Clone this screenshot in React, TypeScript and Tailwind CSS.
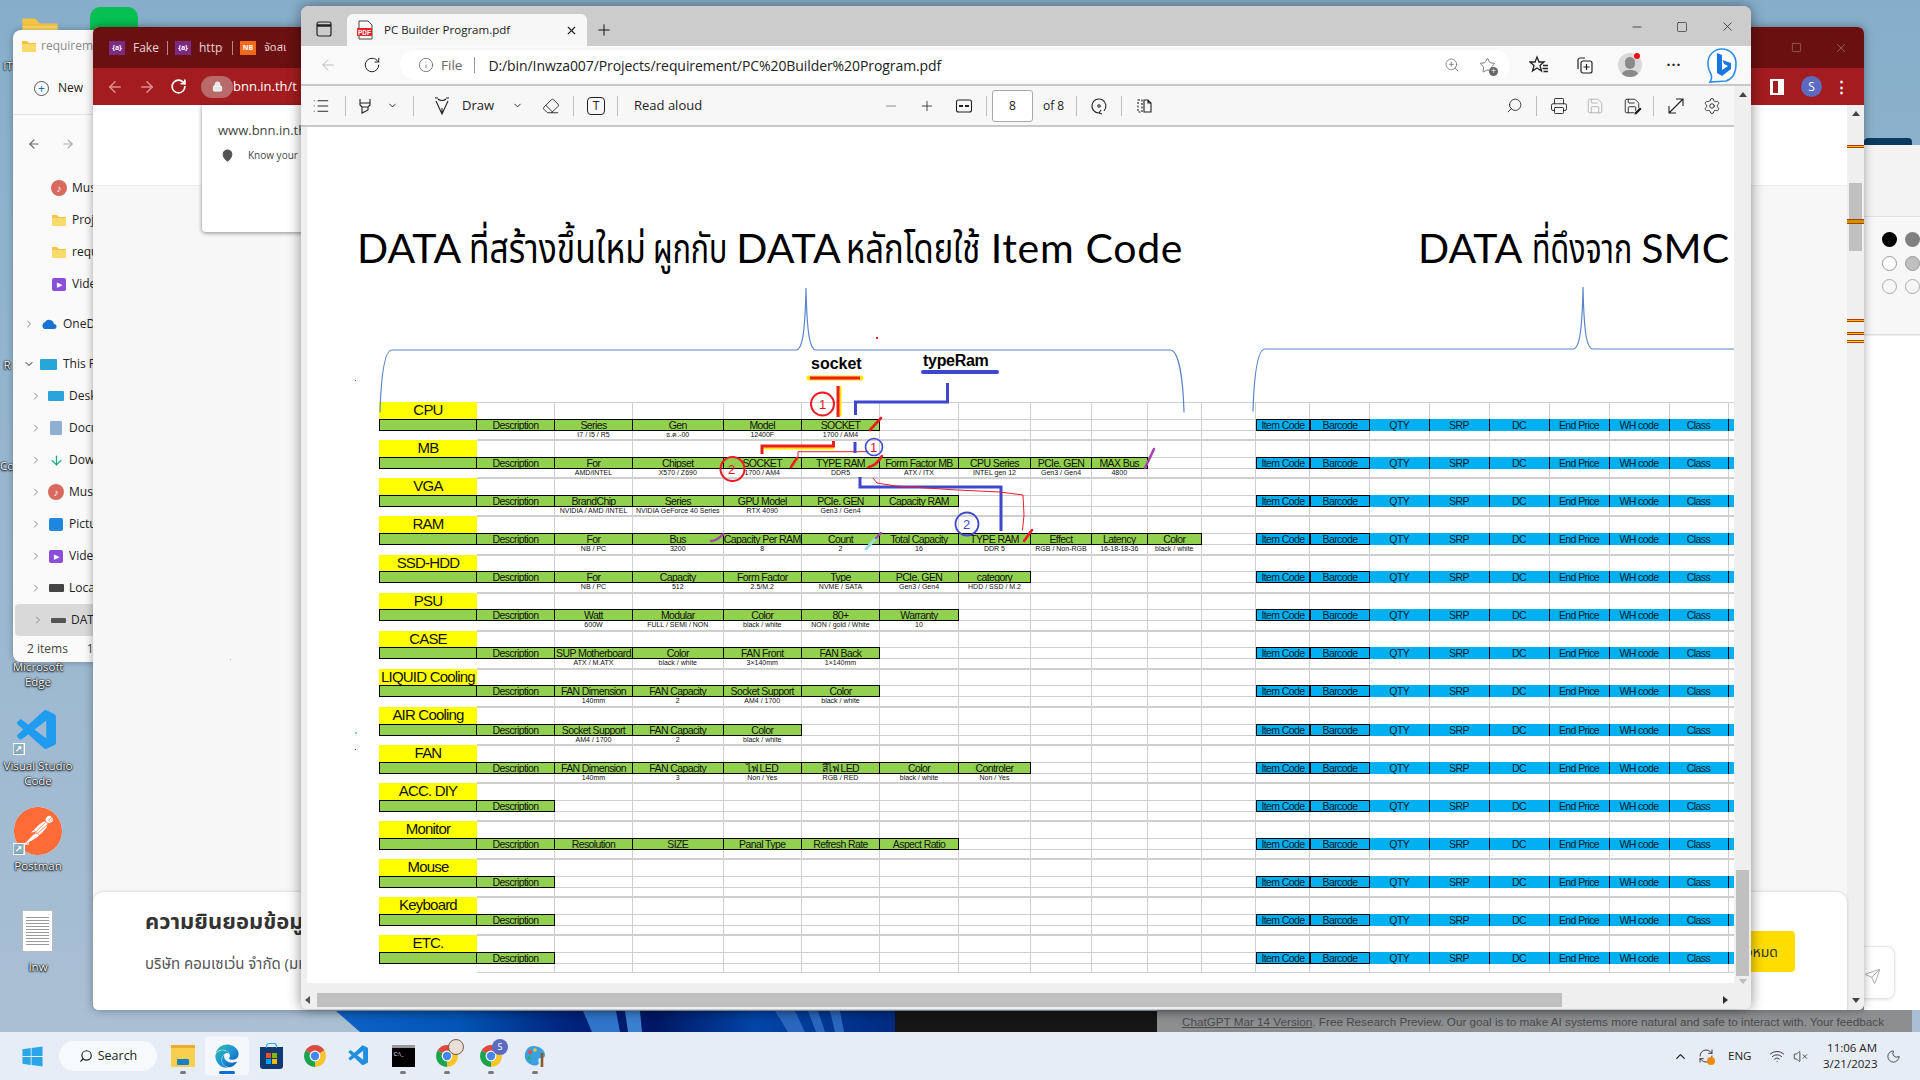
import {
  ArrowLeft, ArrowRight, ChevronDown, ChevronRight, ChevronUp, Eraser, Info, List, Lock, MapPin,
  Minus, Moon, Plus, Printer, RefreshCw, RotateCw, Save, Search, Send, Settings, Square, Star, VolumeX, Wifi, X, ZoomIn,
} from "lucide-react";
import type { ReactNode } from "react";
import { FaEdge, FaWindows } from "react-icons/fa";
import { SiPostman } from "react-icons/si";
import { VscVscode } from "react-icons/vsc";

const SANS = "font-['Open_Sans','Noto_Sans_Thai','Noto_Sans',sans-serif]";
const GRID =
  "grid grid-cols-[98px_78px_78px_90.5px_78.5px_78px_79px_72px_61px_55.5px_54.5px_54px_54px_60px_59.5px_60px_60px_60px_60px_59px_60px]";
const BLUE = ["Item Code", "Barcode", "QTY", "SRP", "DC", "End Price", "WH code", "Class", ""];
const TOTAL = 12;

const SHEET = [
  { name: "CPU", heads: ["Description", "Series", "Gen", "Model", "SOCKET"], subs: ["", "I7 / I5 / R5", "ธ.ค.-00", "12400F", "1700 / AM4"] },
  { name: "MB", heads: ["Description", "For", "Chipset", "SOCKET", "TYPE RAM", "Form Factor MB", "CPU Series", "PCIe. GEN", "MAX Bus"], subs: ["", "AMD/INTEL", "X570 / Z690", "1700 / AM4", "DDR5", "ATX / ITX", "INTEL gen 12", "Gen3 / Gen4", "4800"] },
  { name: "VGA", heads: ["Description", "BrandChip", "Series", "GPU Model", "PCIe. GEN", "Capacity RAM"], subs: ["", "NVIDIA / AMD /INTEL", "NVIDIA GeForce 40 Series", "RTX 4090", "Gen3 / Gen4"] },
  { name: "RAM", heads: ["Description", "For", "Bus", "Capacity Per RAM", "Count", "Total Capacity", "TYPE RAM", "Effect", "Latency", "Color"], subs: ["", "NB / PC", "3200", "8", "2", "16", "DDR 5", "RGB / Non-RGB", "16-18-18-36", "black / white"] },
  { name: "SSD-HDD", heads: ["Description", "For", "Capacity", "Form Factor", "Type", "PCIe. GEN", "category"], subs: ["", "NB / PC", "512", "2.5/M.2", "NVME / SATA", "Gen3 / Gen4", "HDD / SSD / M.2"] },
  { name: "PSU", heads: ["Description", "Watt", "Modular", "Color", "80+", "Warranty"], subs: ["", "600W", "FULL / SEMI / NON", "black / white", "NON / gold / White", "10"] },
  { name: "CASE", heads: ["Description", "SUP Motherboard", "Color", "FAN Front", "FAN Back"], subs: ["", "ATX / M.ATX", "black / white", "3×140mm", "1×140mm"] },
  { name: "LIQUID Cooling", heads: ["Description", "FAN Dimension", "FAN Capacity", "Socket Support", "Color"], subs: ["", "140mm", "2", "AM4 / 1700", "black / white"] },
  { name: "AIR Cooling", heads: ["Description", "Socket Support", "FAN Capacity", "Color"], subs: ["", "AM4 / 1700", "2", "black / white"] },
  { name: "FAN", heads: ["Description", "FAN Dimension", "FAN Capacity", "ไฟ LED", "สีไฟ LED", "Color", "Controler"], subs: ["", "140mm", "3", "Non / Yes", "RGB / RED", "black / white", "Non / Yes"] },
  { name: "ACC. DIY", heads: ["Description"], subs: [] },
  { name: "Monitor", heads: ["Description", "Resolution", "SIZE", "Panal Type", "Refresh Rate", "Aspect Ratio"], subs: [] },
  { name: "Mouse", heads: ["Description"], subs: [] },
  { name: "Keyboard", heads: ["Description"], subs: [] },
  { name: "ETC.", heads: ["Description"], subs: [] },
];

function SheetRow({ name, heads, subs }: { name: string; heads: string[]; subs: string[] }) {
  const empties = Array.from({ length: TOTAL + BLUE.length - 1 });
  return (
    <div className="font-['Liberation_Sans',sans-serif] text-[#111]">
      <div className={`${GRID} h-[16.7px]`}>
        <div className="bg-[#ffff00] text-center text-[15px] leading-[15px] tracking-[-0.8px] whitespace-nowrap overflow-hidden">{name}</div>
        {empties.map((_, i) => (
          <div key={i} className="border-r border-t border-[#cfcfcf]" />
        ))}
      </div>
      <div className={`${GRID} h-[12px]`}>
        <div className="bg-[#92d050] border border-black" />
        {Array.from({ length: TOTAL - 1 }).map((_, i) =>
          heads[i] ? (
            <div key={i} className="bg-[#92d050] border-y border-r border-black text-center text-[10.5px] leading-[10px] tracking-[-0.6px] whitespace-nowrap overflow-hidden text-[#111]">
              {heads[i]}
            </div>
          ) : (
            <div key={i} className="border-r border-y border-[#cfcfcf]" />
          ),
        )}
        {BLUE.map((label, i) => (
          <div
            key={i}
            className={
              i < 2
                ? "bg-[#00b0f0] border border-black text-center text-[10.5px] leading-[10px] tracking-[-0.6px] text-[#06202e] whitespace-nowrap"
                : "bg-[#00b0f0] border-r border-black text-center text-[10.5px] leading-[12px] tracking-[-0.6px] text-[#06202e] whitespace-nowrap"
            }
          >
            {label}
          </div>
        ))}
      </div>
      <div className={`${GRID} h-[9.4px]`}>
        <div />
        {empties.map((_, i) => (
          <div key={i} className="border-r border-b border-[#cfcfcf] text-center text-[7px] leading-[8px] whitespace-nowrap overflow-visible">
            {subs[i] ?? ""}
          </div>
        ))}
      </div>
    </div>
  );
}

// brace lines + the hand-drawn marks on top of the sheet, in screen coordinates
function Annotations() {
  return (
    <svg className="absolute left-0 top-0 w-[1427px] h-[858px] pointer-events-none" viewBox="307 127 1427 858" fill="none" strokeLinecap="round">
      <g stroke="#5b86cc" strokeWidth="1.2">
        <path d="M380 412 C381 380 384 350 392 350 L796 350 C802 350 805 335 806 288 C807 335 810 350 816 350 L1170 350 C1179 350 1183 380 1184 412" />
        <path d="M1253 411 C1254 380 1257 349 1265 349 L1573 349 C1579 349 1582 335 1583 287 C1584 335 1587 349 1593 349 L1740 349" />
      </g>
      <g fontFamily="Liberation Sans, sans-serif">
        <text x="811" y="369" fontSize="16" fontWeight="700" fill="#000">socket</text>
        <text x="923" y="366" fontSize="16" fontWeight="700" fill="#000" letterSpacing="-0.3">typeRam</text>
        <text x="819" y="409" fontSize="13" fill="#e8141c">1</text>
        <text x="728" y="474" fontSize="13" fill="#e8141c">2</text>
        <text x="870" y="452" fontSize="13" fill="#e8141c">1</text>
        <text x="963" y="529" fontSize="13" fill="#3f48cc">2</text>
      </g>
      <path d="M809 378 H861" stroke="#ffe600" strokeWidth="5" />
      <path d="M810 378 H860" stroke="#ed1c24" strokeWidth="3" strokeLinecap="butt" />
      <path d="M840 386 V416" stroke="#ffe600" strokeWidth="3" strokeLinecap="butt" />
      <path d="M838 386 V417" stroke="#ed1c24" strokeWidth="3" strokeLinecap="butt" />
      <circle cx="822.5" cy="404" r="11.5" stroke="#ed1c24" strokeWidth="2" />
      <path d="M923 372 H997" stroke="#3f48cc" strokeWidth="4" />
      <path d="M947.5 383 V402 H855.5 V415" stroke="#3f48cc" strokeWidth="3" strokeLinecap="butt" />
      <path d="M870 430 L881 418" stroke="#ed1c24" strokeWidth="2.6" />
      <path d="M763 448 H833" stroke="#ffe600" strokeWidth="3" />
      <path d="M833.5 441 V446 H762 V454" stroke="#ed1c24" strokeWidth="3" strokeLinecap="butt" />
      <path d="M798 457 V451.7 H868" stroke="#ed1c24" strokeWidth="1" />
      <path d="M797 458 L791 467" stroke="#ed1c24" strokeWidth="2.6" />
      <circle cx="732.5" cy="469" r="12" stroke="#ed1c24" strokeWidth="2" />
      <path d="M855 442 V453" stroke="#3f48cc" strokeWidth="3" strokeLinecap="butt" />
      <circle cx="874" cy="447" r="8.5" stroke="#3f48cc" strokeWidth="1.6" />
      <path d="M868.5 467 C875 466 879 461 882 456" stroke="#ed1c24" strokeWidth="2.6" />
      <path d="M1145 468 L1154 449" stroke="#a349a4" strokeWidth="2.6" />
      <path d="M860 477 V487 H1001 V531" stroke="#3f48cc" strokeWidth="3" strokeLinecap="butt" />
      <path d="M873 478 L877 483 L896 486 L957 490 L1000 492 L1023 495 L1024 515 L1022.5 530" stroke="#ed1c24" strokeWidth="1" />
      <path d="M1024 541 L1032 530" stroke="#ed1c24" strokeWidth="2.6" />
      <circle cx="967" cy="524" r="11.5" stroke="#3f48cc" strokeWidth="1.8" />
      <path d="M711 541 C717 541 720 537 723.5 534" stroke="#a349a4" strokeWidth="2.4" />
      <path d="M866 549 L877 537" stroke="#99d9ea" strokeWidth="3" />
      <path d="M876 538 L881 533" stroke="#a349a4" strokeWidth="2.4" />
      <rect x="876" y="337" width="2" height="2" fill="#ed1c24" stroke="none" />
      <rect x="355" y="380" width="1" height="1" fill="#ed1c24" stroke="none" />
      <rect x="355" y="749" width="1" height="1" fill="#ed1c24" stroke="none" />
      <rect x="355" y="732" width="2" height="2" fill="#7fd0ee" stroke="none" />
    </svg>
  );
}

function Sep() {
  return <span className="block w-px h-[20px] bg-[#bdbdbd] shrink-0" />;
}

function PdfToolbar() {
  return (
    <div className="h-[41px] shrink-0 flex items-center bg-[#f7f7f7] border-b-2 border-[#c8c8c8] text-[#222] text-[13px]">
      <List size={18} strokeWidth={1.3} className="ml-[11px]" />
      <span className="ml-[15px]"><Sep /></span>
      <svg width="18" height="18" viewBox="0 0 18 18" fill="none" stroke="#222" strokeWidth="1.1" className="ml-[10px]">
        <path d="M4 2 V8 L6 10 V16 L12 13 V10 L14 8 V2 M4 6 H14 M6 10 H12" />
      </svg>
      <ChevronDown size={11} className="ml-[13px]" />
      <span className="ml-[15px]"><Sep /></span>
      <svg width="18" height="18" viewBox="0 0 18 18" fill="none" stroke="#222" strokeWidth="1.1" className="ml-[19px]">
        <path d="M3 4 L9 17 L15 4 M2 1 H5 M13 1 H16 M5 2 C7 4 11 4 13 2 M9 17 V11" />
      </svg>
      <span className="ml-[11px] w-[32px]">Draw</span>
      <ChevronDown size={11} className="ml-[18px]" />
      <Eraser size={18} strokeWidth={1.2} className="ml-[19px]" />
      <span className="ml-[13px]"><Sep /></span>
      <span className="ml-[13px] w-[18px] h-[18px] rounded-[4px] border border-[#222] flex items-center justify-center text-[12px] leading-none">T</span>
      <span className="ml-[12px]"><Sep /></span>
      <span className="ml-[16px] w-[70px] whitespace-nowrap">Read aloud</span>
      <Minus size={16} strokeWidth={1.2} className="ml-[179px] text-[#777]" />
      <Plus size={16} strokeWidth={1.2} className="ml-[20px]" />
      <svg width="18" height="18" viewBox="0 0 18 18" fill="none" stroke="#222" strokeWidth="1.1" className="ml-[20px]">
        <rect x="1.5" y="3" width="15" height="12" rx="2" />
        <path d="M4 9 H8 M10 9 H14" strokeWidth="1.8" />
      </svg>
      <span className="ml-[13px]"><Sep /></span>
      <span className="ml-[5px] w-[41px] h-[32px] rounded-[3px] border border-[#a8a8a8] bg-white flex items-center justify-center text-[12px]">8</span>
      <span className="ml-[10px] w-[22px] text-[12px] whitespace-nowrap">of 8</span>
      <span className="ml-[11px]"><Sep /></span>
      <svg width="18" height="18" viewBox="0 0 18 18" fill="none" stroke="#222" strokeWidth="1.1" className="ml-[13px]">
        <path d="M9 2 A7 7 0 1 1 4 4.2 M9 2 L6 1 M9 2 L7 5" transform="rotate(180 9 9)" />
        <circle cx="9" cy="9" r="1.2" />
      </svg>
      <span className="ml-[13px]"><Sep /></span>
      <svg width="18" height="18" viewBox="0 0 18 18" fill="none" stroke="#222" strokeWidth="1.1" className="ml-[13px]">
        <path d="M3 3 H7 V15 H3 Z" strokeDasharray="2 1.5" />
        <path d="M9 3 H13 L16 6 V15 H9 Z M13 3 V6 H16" />
      </svg>
      <div className="ml-auto mr-[13px] flex items-center">
        <Search size={17} strokeWidth={1.2} className="-scale-x-100" />
        <span className="ml-[13px]"><Sep /></span>
        <Printer size={18} strokeWidth={1.2} className="ml-[13px]" />
        <Save size={18} strokeWidth={1.2} className="ml-[18px] text-[#b0b0b0]" />
        <span className="relative ml-[19px]">
          <Save size={18} strokeWidth={1.2} />
          <svg width="10" height="10" viewBox="0 0 10 10" className="absolute -right-[2px] -bottom-[1px]">
            <path d="M1 9 L1.5 6.5 L7 1 L9 3 L3.5 8.5 Z" fill="#222" stroke="#f7f7f7" strokeWidth="0.7" />
          </svg>
        </span>
        <span className="ml-[12px]"><Sep /></span>
        <svg width="18" height="18" viewBox="0 0 18 18" fill="none" stroke="#222" strokeWidth="1.1" className="ml-[13px]">
          <path d="M2 16 L16 2 M9 2 H16 V9 M2 9 V16 H9" />
        </svg>
        <Settings size={18} strokeWidth={1.2} className="ml-[18px]" />
      </div>
    </div>
  );
}

function Thai({ children, className }: { children: ReactNode; className: string }) {
  return <span className={`block shrink-0 origin-left ${className}`}>{children}</span>;
}

function PdfPage() {
  return (
    <div className="relative flex-1 min-h-0 ml-[6px] bg-white overflow-hidden">
      <div className="pt-[93px] flex h-[148px] whitespace-nowrap text-[41px] leading-[56px] text-black font-['Lato','Noto_Sans_Thai','Noto_Sans',sans-serif]">
        <div className="pl-[50px] w-[1111px] shrink-0 flex">
          <span>DATA</span>
          <Thai className="ml-[8px] w-[172px] scale-x-[0.82]">ที่สร้างขึ้นใหม่</Thai>
          <Thai className="ml-[12px] w-[73px] scale-x-[0.74]">ผูกกับ</Thai>
          <span className="ml-[10px]">DATA</span>
          <Thai className="ml-[5px] w-[135px] scale-x-[0.8]">หลักโดยใช้</Thai>
          <span className="ml-[10px] tracking-[0.7px]">Item Code</span>
        </div>
        <div className="flex">
          <span>DATA</span>
          <Thai className="ml-[10px] w-[104px] scale-x-[0.74]">ที่ดึงจาก</Thai>
          <span className="ml-[5px]">SMC</span>
        </div>
      </div>
      <div className="ml-[72px] mt-[127.2px] w-[1500px]">
        {SHEET.map((row) => (
          <SheetRow key={row.name} {...row} />
        ))}
      </div>
      <Annotations />
    </div>
  );
}

function PdfWindow() {
  return (
    <div className={`absolute left-[301px] top-[6px] w-[1450px] h-[1003px] flex flex-col rounded-t-[8px] rounded-b-[6px] overflow-hidden bg-[#efefef] shadow-[0_0_14px_rgba(0,0,0,0.45)] ${SANS}`}>
      <div className="h-[40px] shrink-0 bg-[#cccccc] flex items-end relative">
        <svg width="18" height="18" viewBox="0 0 18 18" fill="none" stroke="#222" strokeWidth="1.2" className="ml-[14px] mb-[8px]">
          <rect x="2" y="2" width="14" height="14" rx="2" />
          <path d="M2 5.5 H16" strokeWidth="2.4" />
        </svg>
        <div className="ml-[14px] w-[240px] h-[32px] bg-[#f7f7f7] rounded-t-[6px] flex items-center text-[11.5px] text-[#222]">
          <svg width="18" height="20" viewBox="0 0 18 20" className="ml-[9px]">
            <path d="M3 1 H12 L16 5 V19 H3 Z" fill="#fff" stroke="#444" />
            <rect x="1" y="8" width="15" height="8" fill="#e5252a" />
            <text x="8.5" y="14.5" textAnchor="middle" fontSize="6.5" fontWeight="700" fill="#fff" fontFamily="Liberation Sans, sans-serif">PDF</text>
          </svg>
          <span className="ml-[10px] whitespace-nowrap">PC Builder Program.pdf</span>
          <X size={13} className="ml-auto mr-[9px]" />
        </div>
        <Plus size={18} strokeWidth={1.2} className="ml-[8px] mb-[7px]" />
        <div className="ml-auto mr-[16px] mb-[12px] flex items-center gap-[32px] text-[#222]">
          <Minus size={14} strokeWidth={1.3} />
          <Square size={12} strokeWidth={1.3} />
          <X size={15} strokeWidth={1.2} />
        </div>
      </div>
      <div className="h-[38px] shrink-0 bg-[#f9f9f9] flex items-center text-[#222]">
        <ArrowLeft size={18} strokeWidth={1.2} className="ml-[18px] text-[#b5b5b5]" />
        <RotateCw size={18} strokeWidth={1.3} className="ml-[26px]" />
        <div className="ml-[19px] w-[1110px] h-[30px] bg-white rounded-full flex items-center text-[14px]">
          <Info size={16} strokeWidth={1.2} className="ml-[18px] text-[#666]" />
          <span className="ml-[7px] text-[#666] text-[13.5px]">File</span>
          <span className="ml-[12px] w-px h-[16px] bg-[#999]" />
          <span className="ml-[13px] whitespace-nowrap tracking-[-0.08px]">D:/bin/Inwza007/Projects/requirement/PC%20Builder%20Program.pdf</span>
          <ZoomIn size={16} strokeWidth={1.1} className="ml-auto text-[#666]" />
          <span className="relative ml-[19px] mr-[14px]">
            <Star size={17} strokeWidth={1.1} className="text-[#555]" />
            <span className="absolute -right-[2px] -bottom-[2px] w-[9px] h-[9px] rounded-full bg-[#666] text-white text-[9px] leading-[8px] text-center">+</span>
          </span>
        </div>
        <svg width="20" height="20" viewBox="0 0 20 20" fill="none" stroke="#222" strokeWidth="1.3" className="ml-[19px]">
          <path d="M8 2 L10 7 H15 L11 10.5 L12.5 16 L8 13 L3.5 16 L5 10.5 L1 7 H6 Z" />
          <path d="M14 10.5 H19 M13.5 13.5 H19 M14.5 16.5 H19" />
        </svg>
        <svg width="20" height="20" viewBox="0 0 20 20" fill="none" stroke="#222" strokeWidth="1.2" className="ml-[25px]">
          <path d="M4 14 V5 a2 2 0 0 1 2 -2 h5" />
          <rect x="7" y="6" width="11" height="12" rx="2" />
          <path d="M12.5 9 V15 M9.5 12 H15.5" />
        </svg>
        <span className="relative ml-[24px] w-[24px] h-[24px]">
          <span className="absolute inset-0 rounded-full bg-[#d9d9d9] overflow-hidden flex flex-col items-center justify-end">
            <span className="w-[10px] h-[12px] rounded-full bg-[#8a8a8a] mb-[1px]" />
            <span className="w-[18px] h-[7px] rounded-t-full bg-[#8a8a8a]" />
          </span>
          <span className="absolute right-[2px] top-0 w-[6px] h-[6px] rounded-full bg-[#ee1111]" />
        </span>
        <span className="ml-[24px] w-[16px] text-center text-[14px] leading-none font-bold tracking-[1px]">···</span>
        <svg width="32" height="38" viewBox="0 0 32 38" className="ml-[24px]">
          <path d="M16 3 C24 3 30 9 30 18 C30 27 26 33 20 35 L4 36 C6 33 6 31 5 28 C3 25 2 21 2 17 C2 9 8 3 16 3 Z" fill="#fff" stroke="#2f8fe8" strokeWidth="1.6" />
          <path d="M11 7 L16 9 V24 L22 20 L18 18 L16.5 14 L25 17 V23 L16 30 L11 27 Z" fill="#1976e6" />
        </svg>
      </div>
      <div className="flex-1 min-h-0 flex border-t-2 border-[#c8c8c8]">
        <div className="flex-1 min-w-0 flex flex-col">
          <PdfToolbar />
          <PdfPage />
          <div className="h-[26px] shrink-0 flex items-center pt-[10px] pb-[2px] bg-[#efefef]">
            <span className="ml-[4px] w-0 h-0 border-y-[4px] border-y-transparent border-r-[5px] border-r-[#555]" />
            <span className="ml-[7px] w-[1245px] h-[14px] bg-[#c0c0c0]" />
            <span className="ml-[161px] w-0 h-0 border-y-[4px] border-y-transparent border-l-[5px] border-l-[#333]" />
          </div>
        </div>
        <div className="w-[17px] shrink-0 flex flex-col items-center bg-[#efefef] py-[6px]">
          <span className="w-0 h-0 border-x-[4px] border-x-transparent border-b-[5px] border-b-[#444]" />
          <span className="mt-auto w-[13px] h-[106px] bg-[#c0c0c0]" />
          <span className="mt-[3px] mb-[19px] w-0 h-0 border-x-[4px] border-x-transparent border-t-[5px] border-t-[#bbb]" />
        </div>
      </div>
    </div>
  );
}

function FolderIcon({ size = 16 }: { size?: number }) {
  return (
    <svg width={size} height={size} viewBox="0 0 16 16">
      <path d="M1 3 H6 L8 5 H15 V14 H1 Z" fill="#f5c242" />
      <path d="M1 6 H15 V14 H1 Z" fill="#fbd96b" />
    </svg>
  );
}

function TabIcon({ label, className }: { label: string; className: string }) {
  return <span className={`w-[16px] h-[14px] text-[7px] leading-[14px] text-center font-bold text-white shrink-0 ${className}`}>{label}</span>;
}

function ChromeWindow() {
  return (
    <div className={`absolute left-[93px] top-[27px] w-[1771px] h-[983px] flex flex-col rounded-[6px] overflow-hidden bg-white shadow-[0_0_10px_rgba(0,0,0,0.35)] ${SANS}`}>
      <div className="h-[41px] shrink-0 bg-[#6b1010] flex items-center text-[12px] text-[#e8d4d4]">
        <TabIcon label="{a}" className="ml-[16px] bg-[#7b2a80]" />
        <span className="ml-[8px] w-[25px]">Fake</span>
        <span className="ml-[9px] w-px h-[14px] bg-[#b38a8a]" />
        <TabIcon label="{a}" className="ml-[7px] bg-[#7b2a80]" />
        <span className="ml-[8px] w-[24px] overflow-hidden">https</span>
        <span className="ml-[9px] w-px h-[14px] bg-[#b38a8a]" />
        <TabIcon label="NB" className="ml-[7px] bg-[#f26a1b]" />
        <span className="ml-[8px] w-[25px] overflow-hidden text-[11px] whitespace-nowrap">จัดสเ</span>
        <div className="ml-auto mr-[16px] flex items-center gap-[32px] text-[#b08a8a]">
          <Square size={11} strokeWidth={1.2} />
          <X size={14} strokeWidth={1.1} />
        </div>
      </div>
      <div className="h-[37px] shrink-0 bg-[#a31c1f] flex items-center text-white">
        <ArrowLeft size={18} className="ml-[13px] text-[#dd8f8f]" />
        <ArrowRight size={18} className="ml-[14px] text-[#dd8f8f]" />
        <RotateCw size={17} strokeWidth={2.4} className="ml-[14px]" />
        <span className="ml-[14px] w-[32px] h-[22px] rounded-full bg-[#b96a6a] flex items-center justify-center"><Lock size={11} fill="#e6e6e6" /></span>
        <span className="text-[13px]">bnn.in.th/t</span>
        <div className="ml-auto mr-[20px] flex items-center">
          <span className="w-[14px] h-[16px] bg-white border-l-[3px] border-r-[6px] border-y-[2px] border-white flex"><span className="flex-1 bg-[#a31c1f]" /></span>
          <span className="ml-[17px] w-[21px] h-[21px] rounded-full bg-[#5c6bc0] text-[12px] text-center leading-[21px]">S</span>
          <span className="ml-[12px] w-[10px] text-center text-[15px] font-bold leading-none">⋮</span>
        </div>
      </div>
      <div className="relative flex-1 flex min-h-0">
        <div className="flex-1 flex flex-col">
          <div className="h-[81px] bg-white border-b border-[#eeeeee]" />
          <div className="flex-1 bg-[#f7f7f7]" />
        </div>
        <div className="relative w-[17px] bg-[#efefef] flex flex-col items-center py-[6px]">
          <span className="w-0 h-0 border-x-[4px] border-x-transparent border-b-[5px] border-b-[#444]" />
          <span className="mt-[67px] w-[13px] h-[68px] bg-[#c0c0c0]" />
          <span className="mt-auto mb-[1px] w-0 h-0 border-x-[4px] border-x-transparent border-t-[5px] border-t-[#444]" />
          <span className="absolute left-0 right-0 top-[40px] h-[3px] bg-[#f2c200] border-y border-[#b33c00]" />
          <span className="absolute left-0 right-0 top-[114px] h-[5px] bg-[#c89400] border-y border-[#b33c00]" />
          <span className="absolute left-0 right-0 top-[214px] h-[3px] bg-[#f2c200] border-y border-[#b33c00]" />
          <span className="absolute left-0 right-0 top-[227px] h-[3px] bg-[#f2c200] border-y border-[#b33c00]" />
          <span className="absolute left-0 right-0 top-[235px] h-[3px] bg-[#ffe600] border-y border-[#b33c00]" />
        </div>
        <div className="absolute left-[109px] top-0 w-[200px] h-[127px] bg-white rounded-b-[4px] shadow-[0_1px_4px_rgba(0,0,0,0.45)] text-[#444]">
          <div className="pl-[16px] pt-[16px] text-[13px] leading-[18px]">www.bnn.in.th</div>
          <div className="pl-[19px] pt-[9px] flex items-center text-[10px]">
            <MapPin size={13} fill="#555" className="text-[#555]" />
            <span className="ml-[14px]">Know your location</span>
          </div>
        </div>
        <div className="absolute left-0 right-[17px] bottom-0 h-[118px] bg-white rounded-t-[10px] shadow-[0_0_3px_rgba(0,0,0,0.2)]">
          <div className="pl-[52px] pt-[12px] text-[22px] leading-[32px] font-bold text-[#333] whitespace-nowrap">ความยินยอมข้อมูล</div>
          <div className="pl-[52px] pt-[16px] text-[15px] leading-[22px] text-[#555] whitespace-nowrap">บริษัท คอมเซเว่น จำกัด (มหาชน)</div>
          <div className="absolute right-[52px] top-[39px] w-[100px] h-[41px] rounded-[4px] bg-[#ffdd00] text-right pr-[17px] text-[14px] leading-[41px] text-[#333] whitespace-nowrap">ยอมรับทั้งหมด</div>
        </div>
      </div>
    </div>
  );
}

const NAV = [
  { label: "Music", icon: "music" },
  { label: "Projects", icon: "folder" },
  { label: "requirement", icon: "folder" },
  { label: "Videos", icon: "video" },
];
const PC = [
  { label: "Desktop", icon: "desk" },
  { label: "Documents", icon: "doc" },
  { label: "Downloads", icon: "down" },
  { label: "Music", icon: "music" },
  { label: "Pictures", icon: "pict" },
  { label: "Videos", icon: "video" },
  { label: "Local Disk", icon: "local" },
  { label: "DATA", icon: "drive" },
];

function NavIcon({ type }: { type: string }) {
  if (type === "folder") return <FolderIcon />;
  if (type === "music") return <span className="w-[16px] h-[16px] rounded-full bg-[#d9695f] text-white text-[10px] leading-[16px] text-center">♪</span>;
  if (type === "video") return <span className="w-[14px] h-[13px] rounded-[2px] bg-[#8a4fd8] text-white text-[7px] leading-[13px] text-center">▶</span>;
  if (type === "desk") return <span className="w-[16px] h-[10px] rounded-[1px] bg-[#2ba3dd]" />;
  if (type === "doc") return <span className="w-[12px] h-[14px] bg-[#8fb0d0] rounded-[1px]" />;
  if (type === "down") return <ArrowLeft size={15} strokeWidth={2} className="text-[#23a98a] -rotate-90" />;
  if (type === "pict") return <span className="w-[14px] h-[13px] rounded-[2px] bg-[#1f87e0]" />;
  if (type === "local") return <span className="w-[15px] h-[8px] rounded-[1px] bg-[#444]" />;
  return <span className="w-[15px] h-[5px] rounded-[1px] bg-[#555]" />;
}

function ExplorerWindow() {
  return (
    <div className={`absolute left-[13px] top-[30px] w-[150px] h-[632px] rounded-[8px] overflow-hidden bg-[#fafafa] shadow-[0_0_6px_rgba(0,0,0,0.3)] text-[12px] text-[#222] ${SANS}`}>
      <div className="h-[32px] flex items-center pl-[8px] text-[#8a8a8a]">
        <FolderIcon />
        <span className="ml-[4px]">requirement</span>
      </div>
      <div className="h-[53px] flex items-center pl-[21px] border-b border-[#e2e2e2]">
        <span className="w-[15px] h-[15px] rounded-full border border-[#555] text-[#0a70c8] text-[12px] leading-[13px] text-center">+</span>
        <span className="ml-[9px]">New</span>
      </div>
      <div className="h-[57px] flex items-center pl-[14px] gap-[20px]">
        <ArrowLeft size={14} className="text-[#666]" />
        <ArrowRight size={14} className="text-[#aaa]" />
      </div>
      {NAV.map((n) => (
        <div key={n.label} className="h-[32px] flex items-center pl-[38px] whitespace-nowrap">
          <span className="w-[16px] flex justify-center"><NavIcon type={n.icon} /></span>
          <span className="ml-[5px]">{n.label}</span>
        </div>
      ))}
      <div className="h-[32px] mt-[8px] flex items-center pl-[10px]">
        <ChevronRight size={12} className="text-[#888]" />
        <svg width="18" height="12" viewBox="0 0 18 12" className="ml-[5px]"><path d="M4 11 a4 4 0 0 1 1 -7 a5 5 0 0 1 9 2 a2.5 2.5 0 0 1 0 5 Z" fill="#1a73d2" /></svg>
        <span className="ml-[5px]">OneDrive</span>
      </div>
      <div className="h-[32px] mt-[8px] flex items-center pl-[10px]">
        <ChevronDown size={12} />
        <span className="ml-[5px] w-[17px] h-[11px] bg-[#27a6d8] rounded-[1px]" />
        <span className="ml-[6px]">This PC</span>
      </div>
      {PC.map((n) => (
        <div key={n.label} className={`h-[32px] flex items-center pl-[17px] ${n.label === "DATA" ? "bg-[#d9d9d9] mx-[2px] rounded-[4px] pl-[15px]" : ""}`}>
          <ChevronRight size={12} className="text-[#888]" />
          <span className="ml-[6px] w-[16px] flex justify-center"><NavIcon type={n.icon} /></span>
          <span className="ml-[5px]">{n.label}</span>
        </div>
      ))}
      <div className="h-[26px] flex items-center pl-[14px] text-[#444]">
        <span>2 items</span>
        <span className="ml-[19px]">1</span>
      </div>
    </div>
  );
}

// window that sits behind Chrome on the right edge
function PaintWindow() {
  return (
    <div className="absolute left-[1864px] top-[138px] w-[56px] h-[872px] flex flex-col">
      <div className="h-[7px] w-[48px] bg-[#0b3a60] rounded-t-[4px]" />
      <div className="h-[72px] bg-[#f3f3f3] border-b border-[#e0e0e0]" />
      <div className="h-[118px] bg-[#f7f7f7] border-b border-[#e0e0e0] pl-[18px] pt-[15px] grid grid-cols-[23px_23px] auto-rows-[23.5px] overflow-hidden">
        <span className="w-[15px] h-[15px] rounded-full bg-black" />
        <span className="w-[15px] h-[15px] rounded-full bg-[#808080]" />
        <span className="w-[15px] h-[15px] rounded-full bg-white border border-[#999]" />
        <span className="w-[15px] h-[15px] rounded-full bg-[#c0c0c0] border border-[#999]" />
        <span className="w-[15px] h-[15px] rounded-full bg-[#f7f7f7] border border-[#aaa]" />
        <span className="w-[15px] h-[15px] rounded-full bg-[#f7f7f7] border border-[#aaa]" />
      </div>
      <div className="flex-1 bg-white pt-[10px] border-t border-[#eeeeee]">
        <div className="mt-[600px] w-[31px] h-[53px] border border-[#e6e6e6] border-l-0 rounded-r-[8px] pt-[21px] shadow-[0_1px_3px_rgba(0,0,0,0.1)]">
          <Send size={17} strokeWidth={1.2} className="text-[#9aa0a6]" />
        </div>
      </div>
    </div>
  );
}

function DesktopLabel({ children, className }: { children: ReactNode; className: string }) {
  return (
    <div className={`absolute w-[76px] text-center text-white text-[11.5px] leading-[15px] [text-shadow:0_1px_2px_#000,0_0_2px_#000,0_0_1px_#000] font-['Open_Sans',sans-serif] ${className}`}>{children}</div>
  );
}

function ShortcutArrow() {
  return <span className="absolute -left-[1px] bottom-0 w-[12px] h-[12px] bg-white text-[#1a73d2] text-[9px] leading-[11px] text-center">↗</span>;
}

function Desktop() {
  return (
    <div className="relative flex-1 overflow-hidden bg-gradient-to-b from-[#86aeca] to-[#a9bfd4]">
      <div className="absolute left-[20px] top-[11px]"><FolderIcon size={40} /></div>
      <div className="absolute left-[90px] top-[7px] w-[48px] h-[40px] rounded-[10px] bg-[#06c152]" />
      <DesktopLabel className="-left-[30px] top-[58px]">IT</DesktopLabel>
      <DesktopLabel className="-left-[31px] top-[357px]">R</DesktopLabel>
      <DesktopLabel className="-left-[31px] top-[458px]">Co</DesktopLabel>
      <DesktopLabel className="left-0 top-[659px]">Microsoft<br />Edge</DesktopLabel>

      <div className="absolute left-[14px] top-[707px] w-[48px] h-[48px]">
        <VscVscode size={48} className="text-[#1f9cf0]" />
        <ShortcutArrow />
      </div>
      <DesktopLabel className="left-0 top-[758px]">Visual Studio<br />Code</DesktopLabel>
      <div className="absolute left-[14px] top-[807px] w-[48px] h-[48px] rounded-full bg-white">
        <SiPostman size={48} className="text-[#ff6c37]" />
        <ShortcutArrow />
      </div>
      <DesktopLabel className="left-0 top-[858px]">Postman</DesktopLabel>
      <div className="absolute left-[22px] top-[910px] w-[31px] h-[42px] bg-white border border-[#bbb] flex flex-col gap-[2px] px-[3px] pt-[6px]">
        {Array.from({ length: 10 }).map((_, i) => (
          <span key={i} className="h-px bg-[#9a9a9a]" />
        ))}
      </div>
      <DesktopLabel className="left-0 top-[959px]">Inw</DesktopLabel>

      <svg className="absolute left-[330px] top-[1005px] w-[830px] h-[27px]" viewBox="0 0 830 27">
        <defs>
          <linearGradient id="bloom" x1="0" y1="0" x2="1" y2="0">
            <stop offset="0" stopColor="#0e63c8" />
            <stop offset="0.22" stopColor="#0255b5" />
            <stop offset="0.42" stopColor="#01237c" />
            <stop offset="0.57" stopColor="#001763" />
            <stop offset="0.75" stopColor="#0245a8" />
            <stop offset="1" stopColor="#012a80" />
          </linearGradient>
        </defs>
        <path d="M6 6 L30 27 H565 V6 Z" fill="url(#bloom)" />
        <path d="M253 6 H286 L290 27 H262 Z" fill="#2f74c8" />
        <path d="M295 6 H310 L312 27 H298 Z" fill="#3b7fcf" />
        <path d="M445 6 H465 L475 27 H458 Z" fill="#2a66bd" />
        <path d="M478 6 H488 L495 27 H486 Z" fill="#2a66bd" />
        <path d="M500 6 H510 L514 27 H505 Z" fill="#2a66bd" />
        <rect x="565" y="6" width="262" height="21" fill="#161616" />
      </svg>
      <div className="absolute left-[1157px] top-[1005px] w-[755px] h-[27px] bg-[#8d8e90] pt-[9px] pl-[25px] whitespace-nowrap text-[11.7px] leading-[15px] text-[#4a4a4d] font-['Liberation_Sans',sans-serif]">
        <span className="underline">ChatGPT Mar 14 Version</span>. Free Research Preview. Our goal is to make AI systems more natural and safe to interact with. Your feedback
      </div>

      <PaintWindow />
      <ExplorerWindow />
      <ChromeWindow />
      <PdfWindow />
      <div className="absolute left-[230px] top-[659px] w-[1px] h-[1px] bg-[#7fd0ee]" />
    </div>
  );
}

function ChromeLogo({ badge }: { badge?: "s" | "cat" }) {
  return (
    <span className="relative block w-[24px] h-[24px]">
      <svg width="24" height="24" viewBox="0 0 24 24">
        <path d="M12 12 L2.5 6.5 A11 11 0 0 1 21.5 6.5 Z" fill="#dd4b3e" />
        <path d="M12 12 L21.5 6.5 A11 11 0 0 1 12 23 Z" fill="#f7c52b" />
        <path d="M12 12 L12 23 A11 11 0 0 1 2.5 6.5 Z" fill="#1ca34f" />
        <circle cx="12" cy="12" r="5.4" fill="#fff" />
        <circle cx="12" cy="12" r="4.2" fill="#4285f4" />
      </svg>
      {badge === "s" && <span className="absolute -top-[5px] -right-[5px] w-[16px] h-[16px] rounded-full bg-[#5c6bc0] text-white text-[9px] leading-[16px] text-center">S</span>}
      {badge === "cat" && <span className="absolute -top-[5px] -right-[5px] w-[16px] h-[16px] rounded-full bg-[#e8e0d8] border border-[#7a5a44]" />}
    </span>
  );
}

function Pip() {
  return <span className="absolute bottom-[6px] left-1/2 -translate-x-1/2 w-[6px] h-[3px] rounded-full bg-[#7a7a7a]" />;
}

function Taskbar() {
  return (
    <div className={`h-[48px] shrink-0 flex items-center bg-[#e6edf6] text-[#222] text-[12px] ${SANS}`}>
      <svg width="0" height="0" className="absolute">
        <defs>
          <linearGradient id="edgeFill" x1="0" y1="0" x2="1" y2="1">
            <stop offset="0" stopColor="#35c1a5" />
            <stop offset="0.55" stopColor="#1b8fd8" />
            <stop offset="1" stopColor="#0b4fa0" />
          </linearGradient>
        </defs>
      </svg>
      <span className="ml-[21px]"><FaWindows size={23} className="text-[#2aa6e8]" /></span>
      <div className="ml-[15px] w-[98px] h-[30px] rounded-full bg-[#f7fafd] flex items-center justify-center gap-[5px] text-[12.5px]">
        <Search size={14} className="-scale-x-100" />
        Search
      </div>
      <div className="ml-[4px] flex h-full items-center">
        <span className="relative w-[44px] h-full flex items-center justify-center">
          <span className="relative block w-[24px] h-[22px] bg-[#f9cf4f] border-t-[3px] border-[#e9ad2a]">
            <span className="absolute left-[6px] bottom-[2px] w-[12px] h-[6px] rounded-[1px] bg-[#1b7fc4]" />
          </span>
          <Pip />
        </span>
        <span className="relative w-[44px] h-[38px] rounded-[4px] bg-[#f4f7fb] flex items-center justify-center">
          <FaEdge size={24} fill="url(#edgeFill)" />
          <span className="absolute bottom-[1px] left-1/2 -translate-x-1/2 w-[16px] h-[3px] rounded-full bg-[#0a6cd6]" />
        </span>
        <span className="w-[44px] flex justify-center">
          <span className="relative w-[23px] h-[22px] rounded-b-[3px] bg-[#123a72] mt-[4px] flex flex-wrap content-center justify-center gap-px px-[6px]">
            <span className="absolute -top-[4px] left-[6px] w-[11px] h-[5px] rounded-t-[3px] border border-b-0 border-[#2aa6e8]" />
            <span className="w-[5px] h-[5px] bg-[#f25022]" />
            <span className="w-[5px] h-[5px] bg-[#7fba00]" />
            <span className="w-[5px] h-[5px] bg-[#00a4ef]" />
            <span className="w-[5px] h-[5px] bg-[#ffb900]" />
          </span>
        </span>
        <span className="w-[44px] flex justify-center"><ChromeLogo /></span>
        <span className="w-[44px] flex justify-center"><VscVscode size={24} className="text-[#1f8fe0]" /></span>
        <span className="relative w-[44px] h-full flex items-center justify-center">
          <span className="w-[23px] h-[22px] bg-black border-t-[3px] border-[#9a9a9a] text-white text-[6px] leading-[12px] pl-[2px]">C:\_</span>
          <Pip />
        </span>
        <span className="relative w-[44px] h-full flex items-center justify-center"><ChromeLogo badge="cat" /><Pip /></span>
        <span className="relative w-[44px] h-full flex items-center justify-center"><ChromeLogo badge="s" /><Pip /></span>
        <span className="relative w-[44px] h-full flex items-center justify-center">
          <svg width="24" height="24" viewBox="0 0 24 24">
            <path d="M10 2 C17 2 22 6 22 11 C22 14 19 14 17 14 C15 14 15 17 16 19 C15 22 12 22 9 21 C4 19 1 15 2 10 C3 5 6 2 10 2 Z" fill="#3aa0e0" />
            <circle cx="7" cy="8" r="2" fill="#e94b3c" />
            <circle cx="12" cy="6" r="1.8" fill="#f7c52b" />
            <circle cx="6" cy="14" r="1.8" fill="#27ae60" />
            <path d="M19 9 L19 23" stroke="#8a5a2b" strokeWidth="2.6" />
          </svg>
          <Pip />
        </span>
      </div>
      <div className="ml-auto flex items-center pr-[19px]">
        <ChevronUp size={15} />
        <span className="relative ml-[10px]">
          <RefreshCw size={16} strokeWidth={1.3} />
          <span className="absolute -right-[1px] -bottom-[1px] w-[8px] h-[8px] rounded-full bg-[#f08a00]" />
        </span>
        <span className="ml-[14px] w-[24px] text-[11.5px]">ENG</span>
        <Wifi size={16} strokeWidth={1.3} className="ml-[17px]" />
        <VolumeX size={15} strokeWidth={1.2} className="ml-[8px]" />
        <div className="ml-[15px] w-[54px] text-right text-[11.5px] leading-[16px] whitespace-nowrap">
          <div>11:06 AM</div>
          <div>3/21/2023</div>
        </div>
        <Moon size={15} strokeWidth={1.2} className="ml-[9px]" />
      </div>
    </div>
  );
}

export default function App() {
  return (
    <div className="w-[1920px] h-[1080px] overflow-hidden flex flex-col">
      <Desktop />
      <Taskbar />
    </div>
  );
}
